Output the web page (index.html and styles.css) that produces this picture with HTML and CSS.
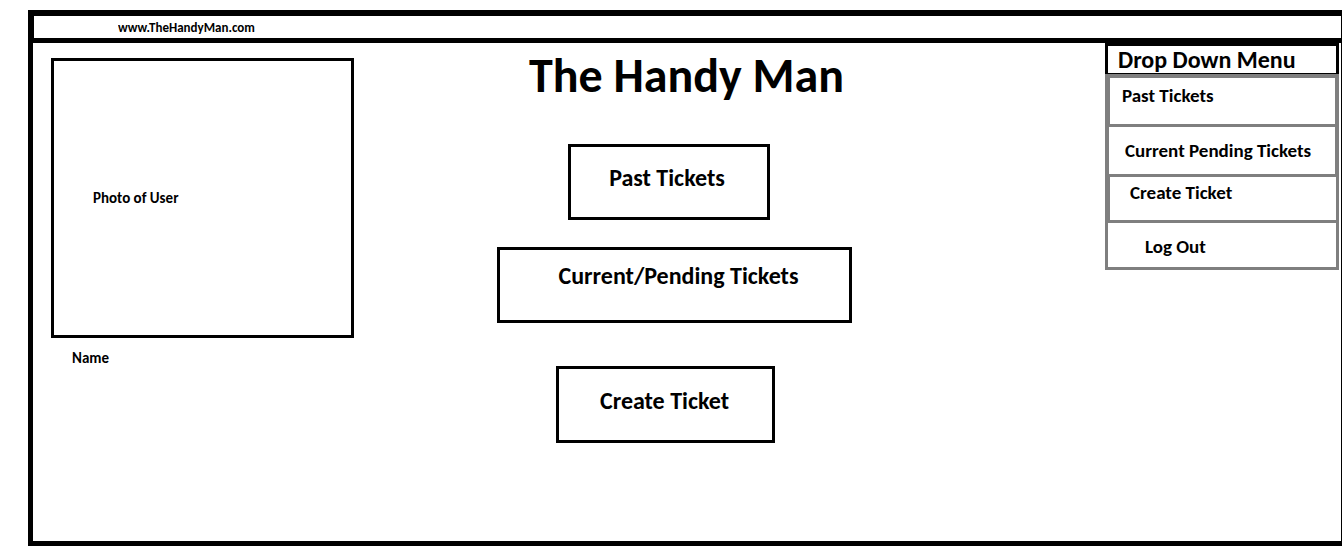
FILE: index.html
```html
<!DOCTYPE html>
<html lang="en">
<head>
<meta charset="utf-8">
<title>The Handy Man</title>
<link rel="stylesheet" href="styles.css">
</head>
<body>
<div class="window">
  <header class="address-bar">
    <input class="address" type="text" aria-label="Address" value="www.TheHandyMan.com">
  </header>
  <div class="page">
    <aside class="profile">
      <div class="photo">Photo of User</div>
      <p class="name">Name</p>
    </aside>
    <main class="content">
      <h1 class="title">The Handy Man</h1>
      <button class="action past" type="button">Past Tickets</button>
      <button class="action pending" type="button">Current/Pending Tickets</button>
      <button class="action create" type="button">Create Ticket</button>
    </main>
    <details class="menu" open>
      <summary class="menu-head">Drop Down Menu</summary>
      <nav class="menu-list">
        <a class="item item-past" href="#past">Past Tickets</a>
        <a class="item item-pending" href="#pending">Current Pending Tickets</a>
        <a class="item item-create" href="#create">Create Ticket</a>
        <a class="item item-logout" href="#logout">Log Out</a>
      </nav>
    </details>
  </div>
</div>
</body>
</html>
```
FILE: styles.css
```css
* {
  box-sizing: border-box;
}

body {
  margin: 0;
  padding: 10px 0 11px 28px;
  background: #fff;
  color: #000;
  font-family: Carlito, Lato, sans-serif;
  font-weight: 700;
}

.window {
  display: flex;
  flex-direction: column;
  min-height: calc(100vh - 21px);
  border: 5px solid #000;
  border-top-width: 6px;
  border-right-width: 1px;
}

.address-bar {
  display: flex;
  padding-left: 84px;
  border-left: 1px solid #000;
  border-bottom: 5px solid #000;
}

.address {
  flex: 1;
  height: 22px;
  padding: 0;
  border: 0;
  outline: 0;
  background: transparent;
  color: inherit;
  font: inherit;
  font-size: 13px;
}

.page {
  flex: 1;
  display: grid;
  grid-template-columns: 303px minmax(355px, 1fr) 234px;
  align-items: start;
  padding: 0 2px 0 18px;
}

.profile {
  padding-top: 15px;
  font-size: 15px;
  line-height: 18px;
}

.photo {
  display: flex;
  align-items: center;
  height: 280px;
  padding-left: 39px;
  border: 3px solid #000;
}

.name {
  margin: 11px 0 0 21px;
}

.content {
  display: flex;
  flex-direction: column;
  align-items: flex-start;
  padding: 7px 0 0 143px;
}

.title {
  margin: 0 0 42px 32px;
  font-size: 48px;
  line-height: 52px;
  white-space: nowrap;
}

.action {
  height: 76px;
  padding: 0;
  border: 3px solid #000;
  background: #fff;
  color: inherit;
  font: inherit;
  font-size: 24px;
  line-height: 24px;
}

.past {
  width: 202px;
  margin-left: 71px;
  padding: 0 4px 8px 0;
}

.pending {
  width: 355px;
  margin-top: 27px;
  padding: 0 0 18px 8px;
}

.create {
  width: 219px;
  height: 77px;
  margin: 43px 0 0 59px;
  padding: 0 2px 8px 0;
}

.menu-head {
  display: block;
  height: 31px;
  padding-left: 10px;
  border: 3px solid #000;
  border-bottom-width: 1px;
  font-size: 24px;
  line-height: 28px;
}

.menu-list {
  display: flex;
  flex-direction: column;
  gap: 3px;
  padding: 4px 3px 3px;
  background: #7f7f7f;
}

.item {
  border: 0 solid #7f7f7f;
  background: #fff;
  color: inherit;
  font-size: 19px;
  line-height: 24px;
  text-decoration: none;
  white-space: nowrap;
}

.item-past {
  min-height: 46px;
  padding: 6px 0 0 12px;
  border-width: 0 1px 0 2px;
}

.item-pending {
  min-height: 47px;
  padding: 12px 0 0 16px;
  border-width: 0 1px;
}

.item-create {
  min-height: 43px;
  padding: 4px 0 0 20px;
  border-left-width: 2px;
}

.item-logout {
  min-height: 44px;
  padding: 12px 0 0 37px;
}
```
